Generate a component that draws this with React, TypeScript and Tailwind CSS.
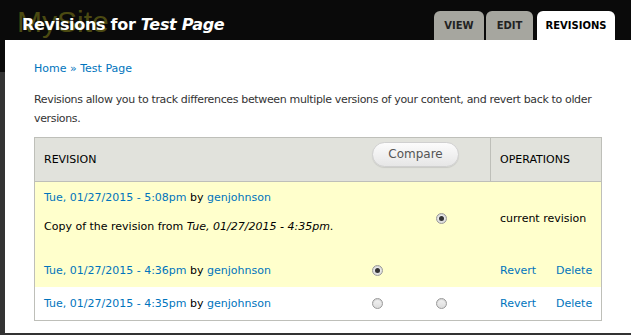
import React from 'react';

function Radio({ checked }: { checked?: boolean }) {
  return (
    <span className="inline-flex w-[11px] h-[11px] rounded-full border border-[#9a9a9a] bg-[linear-gradient(#f4f4f4,#dcdcdc)] items-center justify-center shadow-[inset_0_1px_1px_rgba(0,0,0,0.15)]">
      {checked && <span className="w-[5px] h-[5px] rounded-full bg-[#333]" />}
    </span>
  );
}

function RevLink({ when }: { when: string }) {
  return (
    <div>
      <a className="text-[#0074bd]">Tue, 01/27/2015 - {when}</a> by{' '}
      <a className="text-[#0074bd]">genjohnson</a>
    </div>
  );
}

export default function App() {
  return (
    <div className="w-[631px] h-[335px] overflow-hidden bg-[linear-gradient(#0a0a0a_72px,#333_72px)] pl-[5px] font-['DejaVu_Sans',sans-serif] text-[11px] leading-[19px] text-[#333]">
      {/* header */}
      <div className="relative h-[40px] flex items-end justify-between">
        <div className="absolute left-[12px] top-[7px] text-[30px] leading-[30px] text-[#4b4a12] font-['Liberation_Sans',sans-serif]">
          MySite
        </div>
        <h1 className="relative pl-[17px] pb-[3px] text-[16px] leading-[24px] font-bold tracking-[-0.3px] text-white">
          Revisions for <em>Test Page</em>
        </h1>
        <nav className="flex items-end gap-[2px] pr-[16px] text-[10px] font-bold uppercase">
          <span className="w-[50px] h-[29px] rounded-t-[6px] bg-[#a6a69f] flex items-center justify-center text-[#222]">View</span>
          <span className="w-[47px] h-[29px] rounded-t-[6px] bg-[#a6a69f] flex items-center justify-center text-[#222] mr-[2px]">Edit</span>
          <span className="w-[78px] h-[29px] rounded-t-[6px] bg-white flex items-center justify-center text-black">Revisions</span>
        </nav>
      </div>

      {/* content */}
      <div className="bg-white h-[293px] px-[29px] pt-[19px]">
        <div className="text-[#0074bd]">
          <a>Home</a> » <a>Test Page</a>
        </div>
        <p className="mt-[12px] w-[568px] tracking-[-0.35px]">
          Revisions allow you to track differences between multiple versions of your content, and revert back to older versions.
        </p>

        <div className="mt-[9px] w-[568px] border border-[#bebfb9] grid grid-cols-[310px_64px_81px_111px]">
          {/* header row */}
          <div className="h-[44px] bg-[#e1e2dc] border-b border-[#bebfb9] pl-[9px] flex items-center uppercase text-black">Revision</div>
          <div className="col-span-2 h-[44px] bg-[#e1e2dc] border-b border-[#bebfb9] flex items-start justify-center pt-[4px] pr-[4px]">
            <button className="w-[87px] h-[25px] rounded-full border border-[#d0d0d0] bg-[linear-gradient(#fcfcfc,#e6e6e6)] text-[12px] text-[#555] shadow-[0_1px_1px_rgba(0,0,0,0.1)]">
              Compare
            </button>
          </div>
          <div className="h-[44px] bg-[#e1e2dc] border-b border-l border-[#bebfb9] pl-[9px] flex items-center uppercase text-black">Operations</div>

          {/* row 1: current */}
          <div className="bg-[#ffffcc] pl-[9px] pt-[6px] pb-[17px] text-black">
            <RevLink when="5:08pm" />
            <p className="mt-[10px] mb-[1px]">
              Copy of the revision from <em>Tue, 01/27/2015 - 4:35pm</em>.
            </p>
          </div>
          <div className="bg-[#ffffcc]" />
          <div className="bg-[#ffffcc] flex items-center pl-[27px]">
            <Radio checked />
          </div>
          <div className="bg-[#ffffcc] flex items-center pl-[10px] text-black">current revision</div>

          {/* row 2 */}
          <div className="bg-[#ffffcc] pl-[9px] py-[7px] text-black">
            <RevLink when="4:36pm" />
          </div>
          <div className="bg-[#ffffcc] flex items-center justify-center">
            <Radio checked />
          </div>
          <div className="bg-[#ffffcc]" />
          <div className="bg-[#ffffcc] flex items-center pl-[10px] gap-[20px] text-[#0074bd]">
            <a>Revert</a>
            <a>Delete</a>
          </div>

          {/* row 3 */}
          <div className="pl-[9px] py-[7px] text-black">
            <RevLink when="4:35pm" />
          </div>
          <div className="flex items-center justify-center">
            <Radio />
          </div>
          <div className="flex items-center pl-[27px]">
            <Radio />
          </div>
          <div className="flex items-center pl-[10px] gap-[20px] text-[#0074bd]">
            <a>Revert</a>
            <a>Delete</a>
          </div>
        </div>
      </div>
    </div>
  );
}
